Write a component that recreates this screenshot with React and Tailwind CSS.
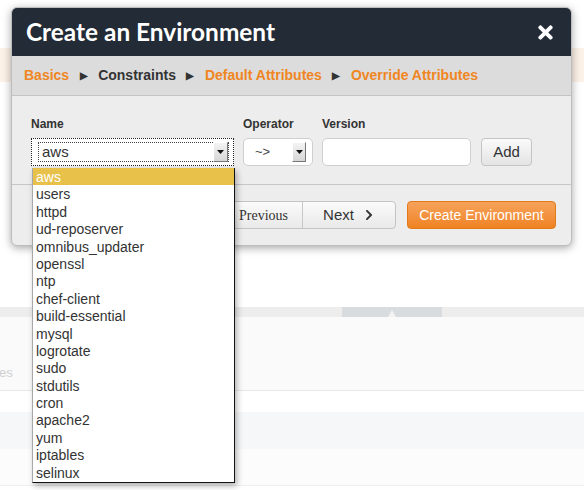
import React from "react";
import { FaTimes, FaChevronRight } from "react-icons/fa";

const items = ["aws","users","httpd","ud-reposerver","omnibus_updater","openssl","ntp","chef-client","build-essential","mysql","logrotate","sudo","stdutils","cron","apache2","yum","iptables","selinux"];

function Arrow() {
  return <span className="text-[10px] text-[#333] leading-none mx-[10.5px]">▶</span>;
}

function SelectArrow({ cls }) {
  return (
    <div className={"flex items-center justify-center bg-gradient-to-b from-[#f4f4f4] to-[#d6d6d6] border-l border-t border-l-white border-t-white border-r border-b border-r-[#777] border-b-[#777] " + cls}>
      <svg width="7" height="4" viewBox="0 0 7 4"><path d="M0 0h7L3.5 4z" fill="#111" /></svg>
    </div>
  );
}

export default function App() {
  return (
    <div className="relative w-[584px] h-[490px] overflow-hidden bg-white" style={{ fontFamily: '"Liberation Sans", Arial, sans-serif' }}>
      {/* page background */}
      <div className="h-[48px]" />
      <div className="h-[34px] bg-[#fdf2e8]" />
      <div className="h-[225px]" />
      <div className="h-[10px] bg-[#ededed] flex">
        <div className="w-[342px]" />
        <div className="w-[100px] bg-[#d9dcdf] flex items-end justify-center">
          <svg width="8" height="7" viewBox="0 0 8 7"><path d="M4 0L8 7H0z" fill="#f3f3f3" /></svg>
        </div>
      </div>
      <div className="h-[73px] bg-[#fafafa] flex items-end pb-[8px]">
        <span className="text-[13px] text-[#cfcfcf] -ml-[1px]">es</span>
      </div>
      <div className="h-[1px] bg-[#e8e8e8]" />
      <div className="h-[21px]" />
      <div className="h-[37px] bg-[#f6f7f8]" />
      <div className="h-[36px] bg-[#fcfcfc]" />
      <div className="h-[1px] bg-[#eeeeee]" />

      {/* modal */}
      <div className="absolute left-[11px] top-[7px] w-[561px] rounded-[6px] bg-[#ededed] shadow-[0_2px_8px_rgba(0,0,0,0.35)] border border-[#bdbdbd]">
        <div className="h-[48px] bg-[#222b36] rounded-t-[5px] flex items-center justify-between pl-[14px] pr-[15px]">
          <span className="text-white text-[24.4px] font-bold" style={{ fontFamily: 'Lato, sans-serif' }}>Create an Environment</span>
          <FaTimes className="text-white text-[21px]" />
        </div>
        <div className="h-[40px] bg-[#dcdcdc] border-b border-[#c4c4c4] flex items-center pl-[12px] text-[14px] font-bold">
          <span className="text-[#f0861f]">Basics</span>
          <Arrow />
          <span className="text-[#333]">Constraints</span>
          <Arrow />
          <span className="text-[#f0861f]">Default Attributes</span>
          <Arrow />
          <span className="text-[#f0861f]">Override Attributes</span>
        </div>
        <div className="pt-[21px] pl-[19px] pb-[18px] border-b border-[#c6c6c6]">
          <div className="flex text-[12px] font-bold text-[#333] leading-[15px]">
            <span className="w-[212px]">Name</span>
            <span className="w-[79px]">Operator</span>
            <span>Version</span>
          </div>
          <div className="flex mt-[6px] items-center">
            <div className="w-[203px] h-[28px] border border-dotted border-[#222] bg-white flex items-center pl-[6px] pr-[5px]">
              <div className="flex-1 h-[20px] border border-dotted border-[#444] flex items-center pl-[3px] text-[15px] text-[#333]">aws</div>
              <SelectArrow cls="w-[15px] h-[20px] -ml-[16px]" />
            </div>
            <div className="ml-[9px] w-[70px] h-[28px] rounded-[5px] border border-[#cfcfcf] bg-white flex items-center pl-[11px] pr-[6px] justify-between text-[13px] text-[#444]">
              <span>~&gt;</span>
              <SelectArrow cls="w-[14px] h-[20px]" />
            </div>
            <div className="ml-[9px] w-[149px] h-[28px] rounded-[5px] border border-[#cfcfcf] bg-white" />
            <div className="ml-[10px] w-[51px] h-[28px] rounded-[4px] border border-[#c4c4c4] bg-gradient-to-b from-[#fafafa] to-[#e4e4e4] flex items-center justify-center text-[15px] text-[#333]">Add</div>
          </div>
        </div>
        <div className="pt-[16px] pb-[16px] pr-[15px] flex justify-end items-center">
          <div className="flex h-[28px] rounded-[4px] border border-[#c4c4c4] bg-gradient-to-b from-[#fbfbfb] to-[#e9e9e9]">
            <div className="w-[80px] flex items-center justify-end pr-[14px] text-[14px] text-[#333] border-r border-[#c8c8c8]" style={{ fontFamily: '"Liberation Serif", serif' }}>Previous</div>
            <div className="w-[92px] flex items-center justify-center gap-[9px] text-[15px] text-[#333]">
              <span>Next</span>
              <FaChevronRight className="text-[12px] text-[#333]" />
            </div>
          </div>
          <div className="ml-[11px] w-[149px] h-[28px] rounded-[4px] border border-[#e07a1a] bg-gradient-to-b from-[#f6a35a] to-[#ef821f] flex items-center justify-center text-[14px] text-white">Create Environment</div>
        </div>
      </div>

      {/* dropdown */}
      <div className="absolute left-[32px] top-[168px] w-[203px] h-[315px] bg-white border-l border-[#a8a8a8] border-r border-r-[#111] border-b border-b-[#111] shadow-[2px_3px_6px_rgba(0,0,0,0.3)] flex flex-col">
        {items.map((it, i) => (
          <div key={it} className={"h-[17.4px] leading-[19px] pl-[3px] text-[14px] " + (i === 0 ? "bg-[#e8c14b] text-white" : "text-[#333]")}>{it}</div>
        ))}
      </div>
    </div>
  );
}
